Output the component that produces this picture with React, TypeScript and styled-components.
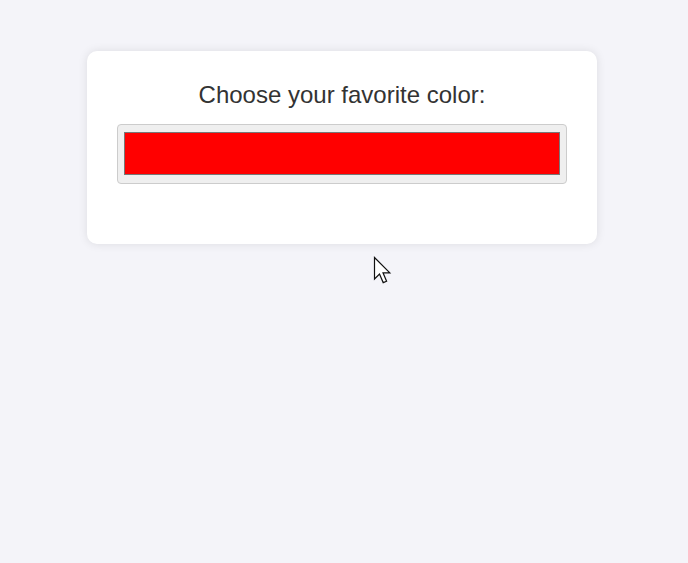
import React from "react";
import styled, { createGlobalStyle } from "styled-components";

const GlobalStyle = createGlobalStyle`
  html, body {
    margin: 0;
    padding: 0;
    background: #f4f4f9;
  }
  body {
    font-family: "Liberation Sans", Arial, sans-serif;
    color: #333;
    min-height: 563px;
  }
`;

const Page = styled.div`
  position: relative;
  display: flex;
  justify-content: center;
  align-items: flex-start;
  padding: 51px 4px 0 0;
  min-height: 563px;
  box-sizing: border-box;
`;

const Card = styled.div`
  width: 510px;
  box-sizing: border-box;
  background: #ffffff;
  border-radius: 10px;
  box-shadow: 0 0 10px rgba(0, 0, 0, 0.1);
  padding: 30px 30px 60px;
  display: flex;
  flex-direction: column;
  align-items: stretch;
`;

const Title = styled.label`
  display: block;
  font-size: 24px;
  line-height: 28px;
  text-align: center;
  color: #333;
  margin: 0 0 15px;
`;

const ColorInput = styled.input`
  -webkit-appearance: none;
  appearance: none;
  display: block;
  width: 450px;
  height: 60px;
  box-sizing: border-box;
  margin: 0;
  padding: 6px;
  padding-top: 7px;
  padding-bottom: 8px;
  border: 1px solid #cccccc;
  border-radius: 4px;
  background: #efefef;
  cursor: pointer;

  &::-webkit-color-swatch-wrapper {
    padding: 0;
  }
  &::-webkit-color-swatch {
    border: 1px solid #777777;
    border-radius: 0;
  }
  &::-moz-color-swatch {
    border: 1px solid #777777;
    border-radius: 0;
  }
`;

const Pointer = styled.svg`
  position: absolute;
  left: 373px;
  top: 256px;
  width: 20px;
  height: 30px;
  pointer-events: none;
  overflow: visible;
`;

export default function App() {
  return (
    <>
      <GlobalStyle />
      <Page>
        <Card>
          <Title htmlFor="fav">Choose your favorite color:</Title>
          <ColorInput id="fav" type="color" defaultValue="#ff0000" />
        </Card>
        <Pointer viewBox="0 0 20 30">
          <path
            d="M1.5 1.5 L1.5 23 L6.5 18 L10.2 26.6 L13.6 25.2 L10 16.8 L16.8 16.8 Z"
            fill="#ffffff"
            stroke="#111111"
            strokeWidth="1.2"
            strokeLinejoin="miter"
          />
        </Pointer>
      </Page>
    </>
  );
}
